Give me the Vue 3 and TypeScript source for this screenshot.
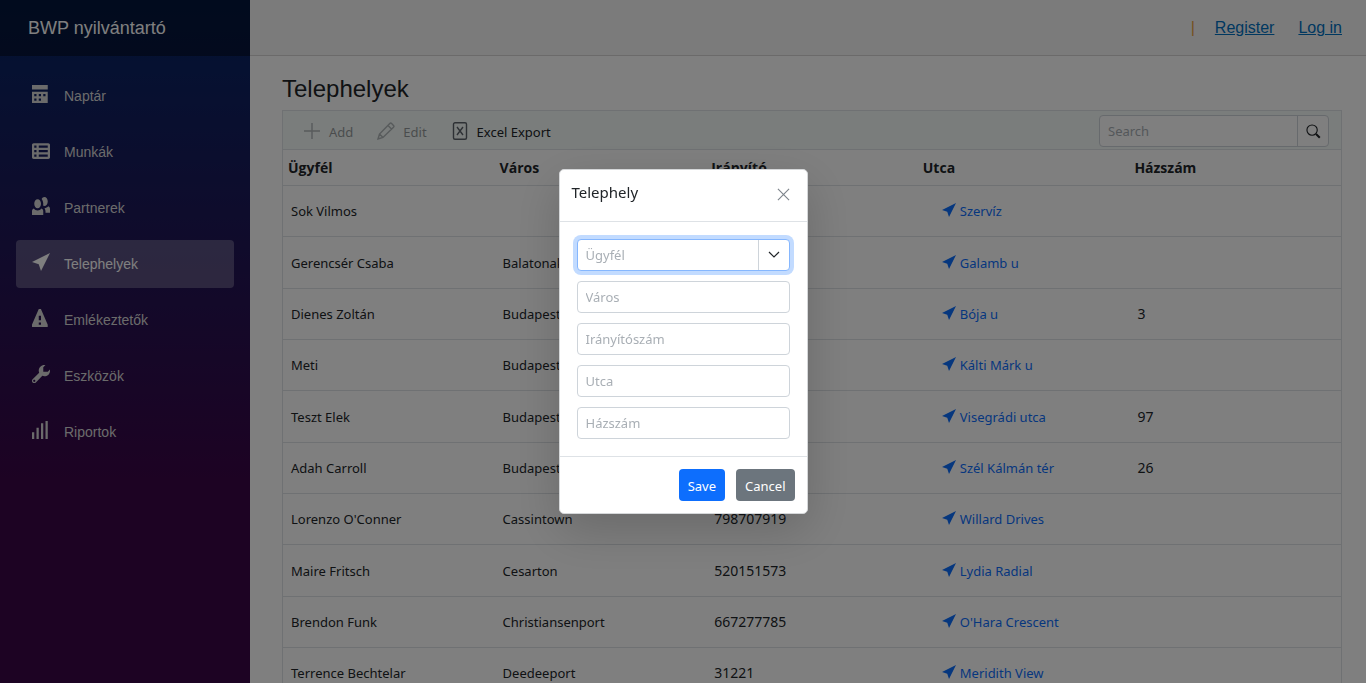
<script setup lang="ts">
import { ref } from 'vue'

interface NavItem {
  label: string
  icon: string
}

interface Site {
  client: string
  city: string
  zip: string
  street: string
  house: string
}

const arrow = 'M8 0l-8 4 3 1 1 3 4-8z'

const navItems: NavItem[] = [
  { label: 'Naptár', icon: 'M0 0v2h7v-2h-7zm0 3v4.91c0 .05.04.09.09.09h6.81c.05 0 .09-.04.09-.09v-4.91h-7zm1 1h1v1h-1v-1zm2 0h1v1h-1v-1zm2 0h1v1h-1v-1zm-4 2h1v1h-1v-1zm2 0h1v1h-1v-1z' },
  { label: 'Munkák', icon: 'M.75 1c-.402 0-.75.348-.75.75v5.5c0 .402.348.75.75.75h6.5c.402 0 .75-.348.75-.75v-5.5c0-.402-.348-.75-.75-.75h-6.5zm.25 1h1v1h-1v-1zm2 0h4v1h-4v-1zm-2 2h1v1h-1v-1zm2 0h4v1h-4v-1zm-2 2h1v1h-1v-1zm2 0h4v1h-4v-1z' },
  { label: 'Partnerek', icon: 'M5.5 0c-.51 0-.95.35-1.22.88.45.54.72 1.28.72 2.13 0 .29-.03.55-.09.81.19.11.38.19.59.19.83 0 1.5-.9 1.5-2s-.67-2-1.5-2zm-3 1c-.83 0-1.5.9-1.5 2s.67 2 1.5 2 1.5-.9 1.5-2-.67-2-1.5-2zm4.75 3.16c-.43.51-1.02.82-1.69.84.27.38.44.84.44 1.34v.66h2v-1.66c0-.52-.31-.97-.75-1.19zm-6.5 1c-.44.22-.75.67-.75 1.19v1.66h5v-1.66c0-.52-.31-.97-.75-1.19-.45.53-1.06.84-1.75.84s-1.3-.32-1.75-.84z' },
  { label: 'Telephelyek', icon: arrow },
  { label: 'Emlékeztetők', icon: 'M3.09 0c-.06 0-.1.04-.13.09l-2.94 6.81c-.02.05-.03.13-.03.19v.81c0 .05.04.09.09.09h6.81c.05 0 .09-.04.09-.09v-.81c0-.05-.01-.14-.03-.19l-2.94-6.81c-.02-.05-.07-.09-.13-.09h-.81zm-.09 3h1v2h-1v-2zm0 3h1v1h-1v-1z' },
  { label: 'Eszközök', icon: 'M5.5 0c-1.38 0-2.5 1.12-2.5 2.5 0 .32.08.62.19.91l-2.91 2.88c-.39.39-.39 1.05 0 1.44.2.2.46.28.72.28.26 0 .52-.09.72-.28l2.88-2.91c.28.11.58.19.91.19 1.38 0 2.5-1.12 2.5-2.5 0-.16 0-.32-.03-.47l-.97.97h-2v-2l.97-.97c-.15-.03-.31-.03-.47-.03zm-4.5 6.5c.28 0 .5.22.5.5s-.22.5-.5.5-.5-.22-.5-.5.22-.5.5-.5z' },
  { label: 'Riportok', icon: 'M6 0v8h1v-8h-1zm-2 1v7h1v-7h-1zm-2 2v5h1v-5h-1zm-2 2v3h1v-3h-1z' },
]
const activeLabel = 'Telephelyek'

const columns = ['Ügyfél', 'Város', 'Irányító', 'Utca', 'Házszám']

const sites: Site[] = [
  { client: 'Sok Vilmos', city: '', zip: '', street: 'Szervíz', house: '' },
  { client: 'Gerencsér Csaba', city: 'Balatonakali', zip: '', street: 'Galamb u', house: '' },
  { client: 'Dienes Zoltán', city: 'Budapest', zip: '', street: 'Bója u', house: '3' },
  { client: 'Meti', city: 'Budapest', zip: '', street: 'Kálti Márk u', house: '' },
  { client: 'Teszt Elek', city: 'Budapest', zip: '', street: 'Visegrádi utca', house: '97' },
  { client: 'Adah Carroll', city: 'Budapest', zip: '', street: 'Szél Kálmán tér', house: '26' },
  { client: "Lorenzo O'Conner", city: 'Cassintown', zip: '798707919', street: 'Willard Drives', house: '' },
  { client: 'Maire Fritsch', city: 'Cesarton', zip: '520151573', street: 'Lydia Radial', house: '' },
  { client: 'Brendon Funk', city: 'Christiansenport', zip: '667277785', street: "O'Hara Crescent", house: '' },
  { client: 'Terrence Bechtelar', city: 'Deedeeport', zip: '31221', street: 'Meridith View', house: '' },
]

const fields = ['Város', 'Irányítószám', 'Utca', 'Házszám']
const values = ref<string[]>(fields.map(() => ''))
const client = ref('')
const search = ref('')
</script>

<template>
  <div class="page">
    <aside class="sidebar">
      <div class="brand-row"><a class="brand" href="#">BWP nyilvántartó</a></div>
      <nav class="nav">
        <a
          v-for="item in navItems"
          :key="item.label"
          href="#"
          class="nav-link"
          :class="{ active: item.label === activeLabel }"
        >
          <svg class="nav-icon" viewBox="0 0 8 8" aria-hidden="true"><path :d="item.icon" /></svg>
          <span>{{ item.label }}</span>
        </a>
      </nav>
    </aside>

    <main class="main">
      <header class="top-row">
        <span class="divider">|</span>
        <a href="#">Register</a>
        <a href="#">Log in</a>
      </header>

      <section class="content">
        <h1>Telephelyek</h1>
        <div class="grid">
          <div class="toolbar">
            <button type="button" class="tool" disabled>
              <svg viewBox="0 0 18 18" aria-hidden="true"><path d="M9 1v16M1 9h16" /></svg>
              <span>Add</span>
            </button>
            <button type="button" class="tool" disabled>
              <svg viewBox="0 0 18 18" aria-hidden="true">
                <path d="M1 17l1.500-5L12.800 1.500q.9-.9 1.800 0l1.900 1.900q.9.900 0 1.800L6 15.500zM11 3.500l3.500 3.500M2.500 12l3.500 3.500" />
              </svg>
              <span>Edit</span>
            </button>
            <button type="button" class="tool">
              <svg viewBox="0 0 18 18" aria-hidden="true">
                <rect x="2.500" y="0.700" width="13" height="16.600" rx="1.500" />
                <path d="M6 5l6 8M12 5l-6 8" />
              </svg>
              <span>Excel Export</span>
            </button>
            <div class="search">
              <input v-model="search" type="text" placeholder="Search" aria-label="Search" />
              <button type="button" aria-label="Run search">
                <svg viewBox="0 0 16 16" aria-hidden="true">
                  <circle cx="6.500" cy="6.500" r="5.500" />
                  <path class="handle" d="M10.700 10.700l4 4" />
                </svg>
              </button>
            </div>
          </div>
          <table>
            <thead>
              <tr><th v-for="c in columns" :key="c" scope="col">{{ c }}</th></tr>
            </thead>
            <tbody>
              <tr v-for="s in sites" :key="s.client">
                <td>{{ s.client }}</td>
                <td>{{ s.city }}</td>
                <td class="num">{{ s.zip }}</td>
                <td>
                  <a href="#" class="street">
                    <svg viewBox="0 0 8 8" aria-hidden="true"><path :d="arrow" /></svg>
                    <span>{{ s.street }}</span>
                  </a>
                </td>
                <td class="num">{{ s.house }}</td>
              </tr>
            </tbody>
          </table>
        </div>
      </section>
    </main>

    <div class="overlay">
      <form class="dialog" role="dialog" aria-labelledby="dialog-title" @submit.prevent>
        <header class="dialog-head">
          <h2 id="dialog-title">Telephely</h2>
          <button type="button" class="close" aria-label="Close">
            <svg viewBox="0 0 14 14" aria-hidden="true"><path d="M1 1l12 12M13 1L1 13" /></svg>
          </button>
        </header>
        <div class="dialog-body">
          <div class="combo">
            <input v-model="client" type="text" placeholder="Ügyfél" aria-label="Ügyfél" />
            <button type="button" aria-label="Open list">
              <svg viewBox="0 0 12 8" aria-hidden="true"><path d="M1 1l5 5 5-5" /></svg>
            </button>
          </div>
          <input
            v-for="(f, i) in fields"
            :key="f"
            v-model="values[i]"
            class="field"
            type="text"
            :placeholder="f"
            :aria-label="f"
          />
        </div>
        <footer class="dialog-foot">
          <button type="submit" class="btn primary">Save</button>
          <button type="button" class="btn secondary">Cancel</button>
        </footer>
      </form>
    </div>
  </div>
</template>

<style>
body {
  overflow: hidden;
}
</style>

<style scoped>
* {
  box-sizing: border-box;
}

.page {
  display: flex;
  height: 100vh;
  overflow: hidden;
  background: #fff;
  color: #212529;
  font-family: "Liberation Sans", Arial, sans-serif;
  font-size: 16px;
  line-height: 24px;
}

button,
input {
  font: inherit;
  color: inherit;
  margin: 0;
}

svg {
  display: block;
  flex: none;
}

.sidebar {
  flex: none;
  width: 250px;
  background: linear-gradient(180deg, rgb(5, 39, 103) 0%, #3a0647 70%);
}

.brand-row {
  display: flex;
  align-items: center;
  height: 56px;
  padding: 0 28px;
  background: rgba(0, 0, 0, 0.4);
}

.brand {
  color: #fff;
  font-size: 18px;
  text-decoration: none;
}

.nav {
  display: flex;
  flex-direction: column;
  gap: 8px;
  padding: 16px;
}

.nav-link {
  display: flex;
  align-items: center;
  gap: 14px;
  height: 48px;
  padding: 0 16px;
  border-radius: 4px;
  color: #d7d7d7;
  font-size: 14px;
  text-decoration: none;
}

.nav-link.active {
  background: rgba(255, 255, 255, 0.25);
  color: #fff;
}

.nav-icon {
  width: 18px;
  height: 18px;
  margin-bottom: 5px;
  fill: currentColor;
}

.main {
  flex: 1;
  min-width: 0;
}

.top-row {
  display: flex;
  align-items: center;
  justify-content: flex-end;
  height: 56px;
  padding: 0 24px;
  gap: 24px;
  background: #f7f7f7;
  border-bottom: 1px solid #d6d5d5;
}

.top-row a {
  color: #0071c1;
}

.divider {
  margin-right: -4px;
  color: #e8a33d;
}

.content {
  padding: 19px 24px 0 32px;
}

h1 {
  margin: 0 0 7px;
  font-size: 24px;
  line-height: 28px;
  font-weight: 400;
}

.grid {
  border: 1px solid #dee2e6;
  font-family: "Noto Sans", "Open Sans", sans-serif;
  font-size: 13px;
}

.toolbar {
  display: flex;
  align-items: center;
  height: 39px;
  padding: 2px 12px 0 12px;
  background: #f4faf8;
  border-bottom: 1px solid #dee2e6;
}

.tool {
  display: flex;
  align-items: center;
  gap: 8px;
  height: 32px;
  padding: 0 8px;
  margin-right: 8px;
  border: 0;
  background: none;
  color: #212529;
}

.tool span {
  padding-top: 2px;
}

.tool svg {
  width: 18px;
  height: 18px;
  fill: none;
  stroke: #5c636a;
  stroke-width: 1.4;
}

.tool:disabled {
  opacity: 0.45;
}

.search {
  display: flex;
  width: 230px;
  height: 32px;
  margin-left: auto;
  border: 1px solid #ced4da;
  border-radius: 4px;
  background: #fff;
  overflow: hidden;
}

.search input,
.combo input {
  flex: 1;
  min-width: 0;
  padding: 0 8px;
  border: 0;
  outline: 0;
  background: none;
}

.search button,
.combo button {
  display: flex;
  align-items: center;
  justify-content: center;
  width: 31px;
  padding: 0;
  border: 0;
  border-left: 1px solid #ced4da;
  background: none;
}

.search svg {
  width: 15px;
  height: 15px;
  fill: none;
  stroke: #212529;
  stroke-width: 1.2;
}

.search .handle {
  stroke-width: 2.2;
}

input::placeholder {
  color: #a9afb5;
  opacity: 1;
}

table {
  width: 100%;
  table-layout: fixed;
  border-collapse: separate;
  border-spacing: 0;
}

th {
  height: 36px;
  padding: 0 5px;
  text-align: left;
  font-family: "Open Sans", "Noto Sans", sans-serif;
  font-size: 14px;
  font-weight: 700;
  border-bottom: 1px solid #dee2e6;
}

td {
  height: 51px;
  padding: 0 8px;
  border-bottom: 1px solid #dee2e6;
}

tr:nth-child(3n + 2) td {
  height: 52px;
}

.num {
  font-size: 14px;
}

.street {
  display: flex;
  align-items: center;
  gap: 4px;
  padding-left: 16px;
  color: #0d6efd;
  text-decoration: none;
}

.street svg {
  width: 14px;
  height: 14px;
  margin-bottom: 2px;
  fill: currentColor;
}

.overlay {
  position: fixed;
  inset: 0;
  display: flex;
  align-items: center;
  justify-content: center;
  background: rgba(0, 0, 0, 0.5);
  font-family: "Noto Sans", "Open Sans", sans-serif;
  font-size: 13px;
}

.dialog {
  width: 249px;
  border: 1px solid #d5d7d9;
  border-radius: 5px;
  background: #fff;
  box-shadow: 0 16px 48px rgba(0, 0, 0, 0.175);
}

.dialog-head {
  display: flex;
  justify-content: space-between;
  height: 52px;
  padding: 11px 17px 0 12px;
  border-bottom: 1px solid #dee2e6;
}

h2 {
  margin: 0;
  font-size: 15px;
  line-height: 22px;
  font-weight: 400;
}

.close {
  height: 26px;
  padding: 0;
  border: 0;
  background: none;
}

.close svg {
  width: 13px;
  height: 13px;
  fill: none;
  stroke: #7d848b;
  stroke-width: 1.2;
}

.dialog-body {
  display: flex;
  flex-direction: column;
  gap: 10px;
  padding: 17px;
}

.combo,
.field {
  width: 100%;
  height: 32px;
  border: 1px solid #ced4da;
  border-radius: 4px;
  background: #fff;
}

.field {
  padding: 0 8px;
}

.combo {
  display: flex;
  border-color: #86b7fe;
  box-shadow: 0 0 0 4px #c2dbff;
}

.combo svg {
  width: 12px;
  height: 8px;
  fill: none;
  stroke: #212529;
  stroke-width: 1.2;
}

.dialog-foot {
  display: flex;
  justify-content: flex-end;
  gap: 11px;
  padding: 12px;
  border-top: 1px solid #dee2e6;
}

.btn {
  height: 32px;
  padding: 2px 9px 0;
  border: 0;
  border-radius: 4px;
  color: #fff;
}

.primary {
  background: #0d6efd;
}

.secondary {
  background: #6c757d;
}
</style>
